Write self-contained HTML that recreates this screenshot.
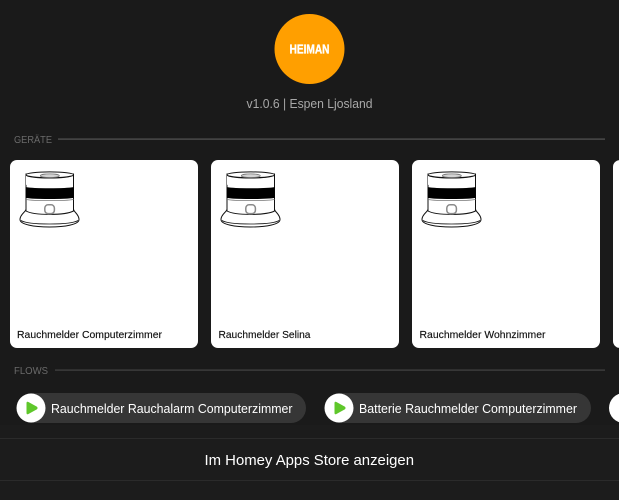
<!DOCTYPE html>
<html><head><meta charset="utf-8"><style>
html,body{margin:0;padding:0;background:#1a1a1a;width:619px;height:500px;overflow:hidden}
svg{display:block;font-family:"Liberation Sans",sans-serif}
</style></head><body>
<svg width="619" height="500" viewBox="0 0 619 500" xmlns="http://www.w3.org/2000/svg">
<defs>
<g id="dev" fill="#fff" stroke="#111" stroke-width="1">
  <path d="M26 209 C26 212 20 214 20 219.500 C20 224.500 34 227 49.500 227 C65 227 79 224.500 79 219.500 C79 214 73.500 212 73.500 209Z" stroke-width="1"/>
  <path d="M21 220.500 C25 223 36 224 49.500 224 C63 224 74 223 78 220.500" fill="none" stroke-width=".8"/>
  <path d="M26 174 V211 C34 215.500 65 215.500 73.500 211 V174Z" stroke-width="1"/>
  <path d="M26 175 V185 C34 180 65 180 73.500 175" stroke="none"/>
  <path d="M26 175 C28 179 71 179 73.500 175" fill="none" stroke-width="1"/>
  <ellipse cx="49.800" cy="174.800" rx="23.800" ry="2.900" stroke-width="1"/>
  <ellipse cx="49.800" cy="175.700" rx="9.500" ry="1.800" fill="#d4d4d4" stroke="#777" stroke-width=".8"/>
  <path d="M26 187.500 C34 189 65 189 73.500 187.500 V197.500 C65 199 34 199 26 197.500Z" fill="#000" stroke="#000" stroke-width=".8"/>
  <path d="M26 199.500 C34 201 65 201 73.500 199.500" fill="none" stroke="#777" stroke-width=".8"/>
  <rect x="44.800" y="204.800" width="9.600" height="8.800" rx="3.300" fill="#fff" stroke="#8a8a8a" stroke-width="1.500"/>
</g>
<g id="play">
  <circle cx="15" cy="15" r="14.500" fill="#fff"/>
  <path d="M11 10 Q11 8.800 12.200 9.400 L20.500 14 Q21.600 15 20.500 16 L12.200 20.600 Q11 21.200 11 20Z" fill="#5fc72b" stroke="#5fc72b" stroke-width="1"/>
</g>
</defs>
<rect width="619" height="500" fill="#1a1a1a"/>
<rect y="425" width="619" height="75" fill="#1c1c1c"/>

<circle cx="309.500" cy="49" r="35" fill="#ff9f00"/>
<text x="289.500" y="53.500" font-size="12.500" font-weight="700" fill="#fff" stroke="#fff" stroke-width=".35" textLength="40" lengthAdjust="spacingAndGlyphs">HEIMAN</text>
<text x="246.500" y="108" font-size="12.500" fill="#a8a8a8" textLength="126" lengthAdjust="spacingAndGlyphs">v1.0.6 | Espen Ljosland</text>

<text x="14" y="143" font-size="10.500" fill="#6a6a6a" textLength="38" lengthAdjust="spacingAndGlyphs">GERÄTE</text>
<rect x="58" y="138.500" width="547" height="1.200" fill="#555"/>

<rect x="10" y="160" width="188" height="188" rx="7" fill="#fff"/>
<rect x="211" y="160" width="188" height="188" rx="7" fill="#fff"/>
<rect x="412" y="160" width="188" height="188" rx="7" fill="#fff"/>
<rect x="613" y="160" width="40" height="188" rx="7" fill="#fff"/>

<use href="#dev"/>
<use href="#dev" x="201"/>
<use href="#dev" x="402"/>

<g stroke="#111" stroke-width=".15" fill="#111" font-size="10.500">
<text x="17" y="338" textLength="145" lengthAdjust="spacingAndGlyphs">Rauchmelder Computerzimmer</text>
<text x="218.500" y="338" textLength="92" lengthAdjust="spacingAndGlyphs">Rauchmelder Selina</text>
<text x="419.500" y="338" textLength="126" lengthAdjust="spacingAndGlyphs">Rauchmelder Wohnzimmer</text>
</g>

<text x="14" y="374" font-size="10.500" fill="#6a6a6a" textLength="34" lengthAdjust="spacingAndGlyphs">FLOWS</text>
<rect x="55" y="369.500" width="550" height="1.200" fill="#444"/>

<rect x="17" y="393" width="289" height="30" rx="15" fill="#363636"/>
<use href="#play" x="16" y="393"/>
<text x="51" y="413" font-size="12.500" fill="#fff" textLength="241.500" lengthAdjust="spacingAndGlyphs">Rauchmelder Rauchalarm Computerzimmer</text>

<rect x="325" y="393" width="266" height="30" rx="15" fill="#363636"/>
<use href="#play" x="324" y="393"/>
<text x="359" y="413" font-size="12.500" fill="#fff" textLength="218" lengthAdjust="spacingAndGlyphs">Batterie Rauchmelder Computerzimmer</text>

<circle cx="624" cy="408" r="15" fill="#fff"/>

<rect x="0" y="438" width="619" height="1" fill="#2b2b2b"/>
<text x="204.500" y="465" font-size="14.500" fill="#fff" textLength="209.500" lengthAdjust="spacingAndGlyphs">Im Homey Apps Store anzeigen</text>
<rect x="0" y="480" width="619" height="1" fill="#2b2b2b"/>
</svg>
</body></html>
